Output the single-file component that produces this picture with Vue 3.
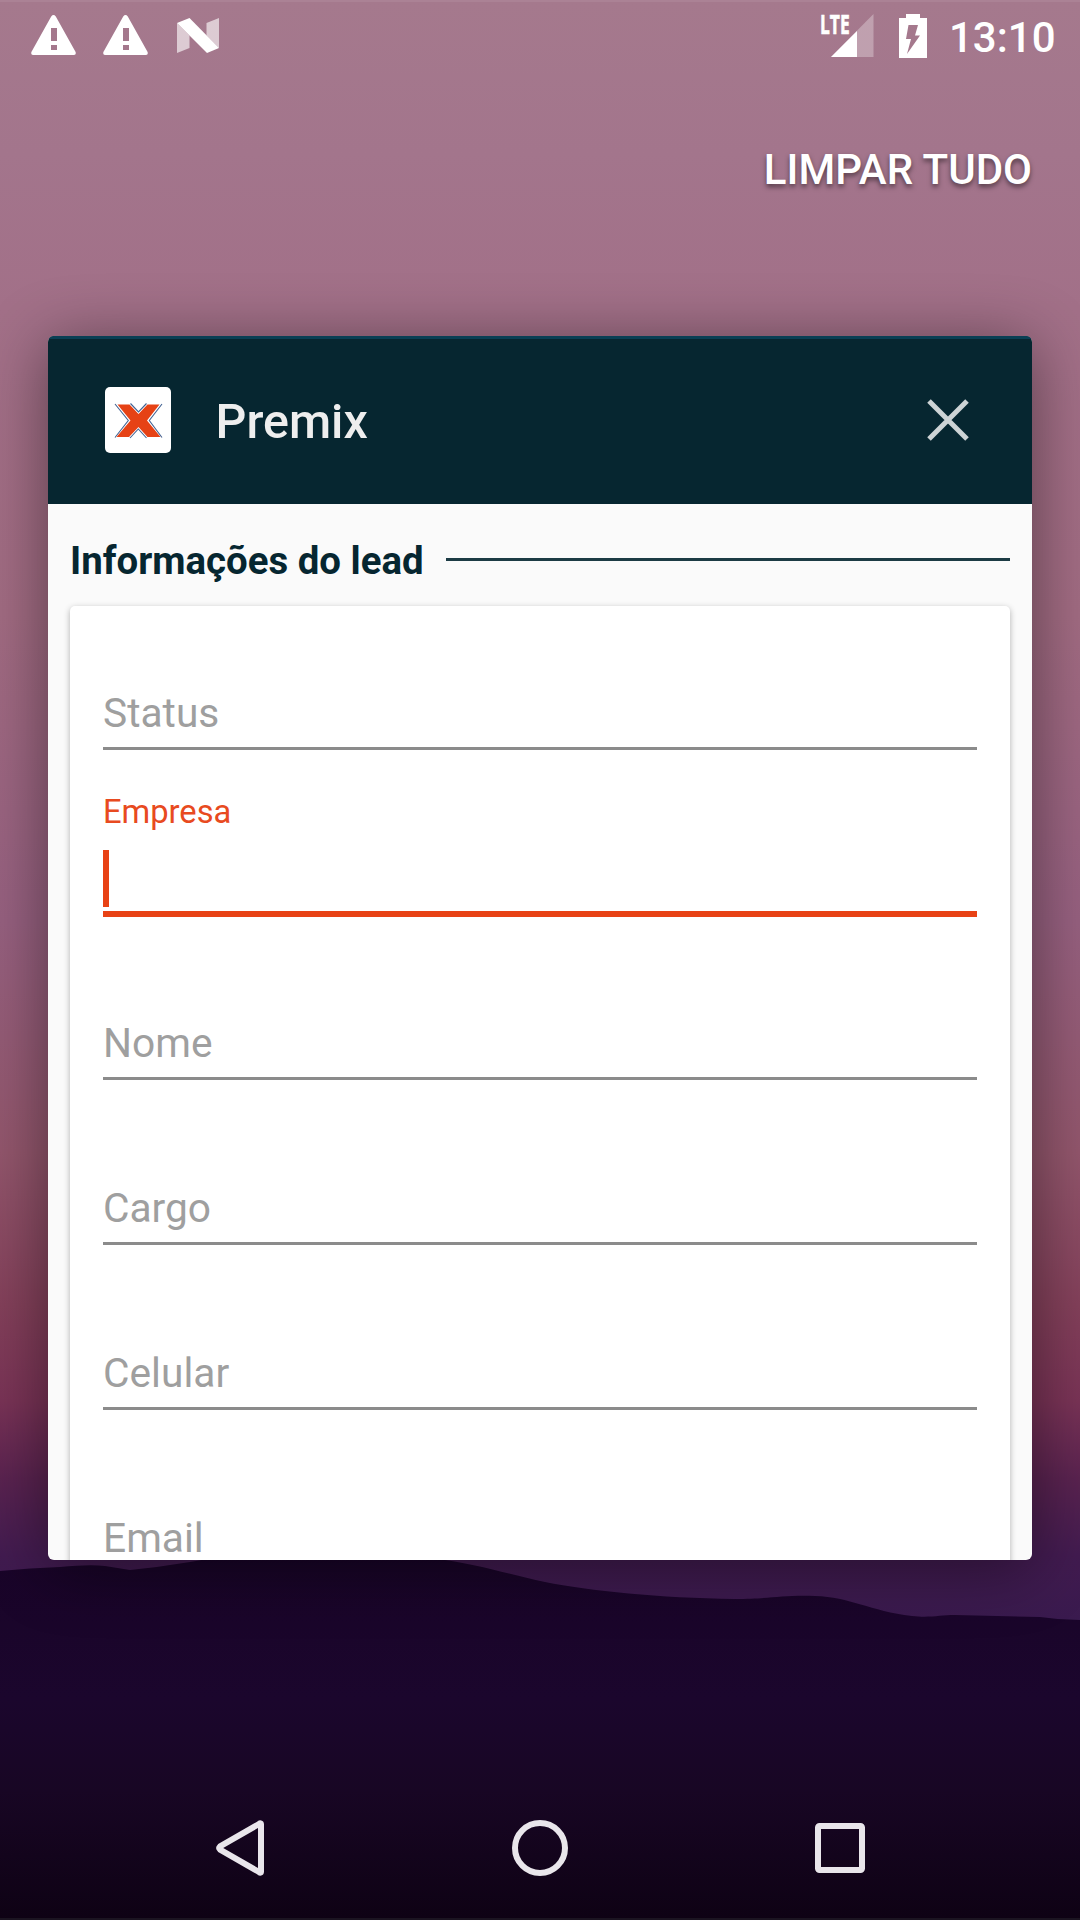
<script setup>
const fields = [
  { label: 'Status' },
  { label: 'Empresa', active: true },
  { label: 'Nome' },
  { label: 'Cargo' },
  { label: 'Celular' },
  { label: 'Email' },
]
</script>

<template>
  <div class="screen">
    <svg class="wallpaper" viewBox="0 0 1080 1920" aria-hidden="true">
      <defs>
        <linearGradient id="sky" x1="0" y1="0" x2="0" y2="1">
          <stop offset="0" stop-color="#a5798d" />
          <stop offset="0.08" stop-color="#a3758c" />
          <stop offset="0.16" stop-color="#a27088" />
          <stop offset="0.32" stop-color="#a16b82" />
          <stop offset="0.48" stop-color="#96607f" />
          <stop offset="0.6" stop-color="#92566c" />
          <stop offset="0.68" stop-color="#83405a" />
          <stop offset="0.73" stop-color="#793356" />
          <stop offset="0.77" stop-color="#5a2350" />
          <stop offset="0.81" stop-color="#421b50" />
          <stop offset="0.85" stop-color="#381a4e" />
        </linearGradient>
        <linearGradient id="hill" x1="0" y1="0" x2="0" y2="1">
          <stop offset="0" stop-color="#190428" />
          <stop offset="0.4" stop-color="#1b062d" />
          <stop offset="0.65" stop-color="#180624" />
          <stop offset="1" stop-color="#0e0214" />
        </linearGradient>
      </defs>
      <rect width="1080" height="1920" fill="url(#sky)" />
    </svg>

    <header class="status">
      <svg class="warn" viewBox="0 0 45 40"><path fill-rule="evenodd" d="M20.2 1.4Q22.5-1.2 24.8 1.4L44.6 37Q45.4 39.8 43 40H2Q-.4 39.8.4 37ZM20 13V26H26V13ZM20 30V35H26V30Z" /></svg>
      <svg class="warn second" viewBox="0 0 45 40"><path fill-rule="evenodd" d="M20.2 1.4Q22.5-1.2 24.8 1.4L44.6 37Q45.4 39.8 43 40H2Q-.4 39.8.4 37ZM20 13V26H26V13ZM20 30V35H26V30Z" /></svg>
      <svg class="nougat" viewBox="0 0 42 35"><path opacity=".62" d="M0 5L12.5 17.5V30L0 35ZM29.5 5L42 0V30L29.5 17.5Z" /><path d="M0 5L12.5 0L42 30L30 35Z" /></svg>
      <span class="space"></span>
      <div class="signal">
        <svg viewBox="0 0 54 44"><path opacity=".3" d="M53.500 0V43H11Z" /><path d="M37 17V43H11Z" /></svg>
        <span class="lte">LTE</span>
      </div>
      <svg class="battery" viewBox="0 0 28 44"><path fill-rule="evenodd" d="M7 0H21V4H28V44H0V4H7ZM9.500 11L7 25H12L8 40L21 21.500H16L19 11Z" /></svg>
      <span class="clock">13:10</span>
    </header>

    <div class="actions"><span class="clear">LIMPAR TUDO</span></div>

    <main class="task">
      <div class="task-head">
        <svg class="logo" viewBox="0 0 66 66">
          <rect width="66" height="66" rx="5" fill="#fff" />
          <path d="M10 17L23.300 33.500L10 50.500M57 17L44.300 33.500L57 50.500M25.500 16.500L33.500 25L41.500 16.500M25 51L33.300 42L41.500 51" fill="none" stroke="#426293" stroke-width="1.100" />
          <path d="M12.500 17.500H24.500L33.500 27L42.500 17.500H54.500L42 33.500L55.500 50H42.500L33.500 40L24 50H11.500L25.500 33.500Z" fill="#e64215" />
        </svg>
        <span class="app-name">Premix</span>
        <svg class="close" viewBox="0 0 42 42"><path d="M2 2L40 40M40 2L2 40" fill="none" stroke="#cdd3d5" stroke-width="5" /></svg>
      </div>
      <section class="content">
        <div class="heading"><h2>Informações do lead</h2><i></i></div>
        <div class="form">
          <div v-for="field in fields" :key="field.label" class="field" :class="{ active: field.active }">
            <label>{{ field.label }}</label>
            <b v-if="field.active" class="caret"></b>
          </div>
        </div>
      </section>
    </main>

    <svg class="hills" viewBox="0 0 1080 370" aria-hidden="true">
      <path fill="url(#hill)" d="M0 21Q30 18 60 17Q90 14 105 16L130 20Q160 17 190 12C270-3 370 1 430 8C480 14 510 25 545 32C590 41 660 48 735 49C770 49 780 45 815 46C850 47 870 61 912 66C930 68 940 65 955 65L1040 67Q1060 70 1080 70V370H0Z" />
    </svg>

    <nav class="nav">
      <svg class="back" viewBox="0 0 48 56"><path d="M45 4.500V51.500Q45 53.500 43 52L4 29.500Q2.500 28 4 26.500L43 4Q45 2.500 45 4.500Z" /></svg>
      <svg class="home" viewBox="0 0 56 56"><circle cx="28" cy="28" r="25" /></svg>
      <svg class="recent" viewBox="0 0 50 50"><rect x="3" y="3" width="44" height="44" rx="1.500" /></svg>
    </nav>
  </div>
</template>

<style>
body { margin: 0; }
</style>

<style scoped>
.screen {
  position: relative;
  display: flex;
  flex-direction: column;
  width: 1080px;
  height: 1920px;
  overflow: hidden;
  font-family: Roboto, "Liberation Sans", sans-serif;
  color: #fff;
}
.screen svg { display: block; flex: none; }
.screen .wallpaper { position: absolute; inset: 0; width: 1080px; height: 1920px; }
.screen .hills { position: absolute; left: 0; top: 1550px; width: 1080px; height: 370px; }

.status {
  position: relative;
  display: flex;
  flex: none;
  box-sizing: border-box;
  height: 72px;
  padding: 14px 24px 0 31px;
  fill: #fff;
  box-shadow: inset 0 2px rgba(255, 255, 255, .07);
}
.warn { width: 45px; height: 40px; margin-top: 1px; }
.second { margin-left: 27px; }
.nougat { width: 42px; height: 35px; margin: 4px 0 0 29px; }
.space { flex: 1; }
.signal { position: relative; width: 54px; height: 44px; margin-right: 25px; }
.signal svg { width: 54px; height: 44px; }
.lte {
  position: absolute;
  left: 0;
  top: 0;
  font: 700 26px/21px "Open Sans", Roboto, sans-serif;
  -webkit-text-stroke: .6px #fff;
  transform: scaleX(.67);
  transform-origin: left;
}
.battery { width: 28px; height: 44px; }
.clock { width: 107px; margin-left: 22px; font-size: 42px; font-weight: 500; line-height: 48px; white-space: nowrap; }

.actions {
  position: relative;
  display: flex;
  flex: none;
  justify-content: flex-end;
  align-items: center;
  height: 194px;
  margin: 0 48px 70px 0;
}
.clear { font-size: 42px; font-weight: 500; text-shadow: 0 3px 5px rgba(0, 0, 0, .5); }

.task {
  position: relative;
  z-index: 1;
  display: flex;
  flex: none;
  flex-direction: column;
  height: 1224px;
  margin: 0 48px;
  border-radius: 6px;
  overflow: hidden;
  background: #fafafa;
  box-shadow: 0 8px 64px rgba(0, 0, 0, .45);
}
.task-head {
  display: flex;
  flex: none;
  align-items: center;
  box-sizing: border-box;
  height: 168px;
  padding: 0 63px 0 57px;
  background: #062630;
  border-top: 3px solid #093f54;
}
.logo { width: 66px; height: 66px; margin-bottom: 3px; }
.app-name { flex: 1; margin-left: 44.5px; font-size: 48.4px; font-weight: 500; color: #eee; }
.close { width: 42px; height: 42px; margin-bottom: 3px; overflow: visible; }

.content { flex: none; padding: 0 22px; }
.heading { display: flex; align-items: center; height: 102px; }
h2 { margin: 12px 0 0; font-size: 38.4px; font-weight: 700; line-height: 50px; color: #062630; white-space: nowrap; }
.heading i { flex: 1; height: 3px; margin: 8px 0 0 22px; background: #1c3b44; }
.form {
  box-sizing: border-box;
  height: 1000px;
  padding: 0 33px;
  background: #fff;
  border-radius: 5px;
  box-shadow: 0 2px 6px rgba(0, 0, 0, .3);
}
.field {
  position: relative;
  display: flex;
  align-items: flex-end;
  box-sizing: border-box;
  height: 165px;
  border-bottom: 3px solid #8b8b8b;
}
.field:first-child { height: 144px; }
label { margin-bottom: 13px; font-size: 40.7px; line-height: 42px; color: #9f9f9f; }
.active { height: 167px; margin-bottom: -2px; border-bottom: 6px solid #e84215; }
.active label { margin-bottom: 79px; font-size: 32.7px; line-height: 40px; color: #e84a20; }
.caret { position: absolute; left: 0; bottom: 4px; width: 6px; height: 57px; background: #e84215; }

.nav {
  position: relative;
  display: flex;
  flex: none;
  align-items: center;
  box-sizing: border-box;
  height: 144px;
  margin-top: auto;
  padding-left: 216px;
  fill: none;
  stroke: #e9e6eb;
  stroke-width: 6;
  box-shadow: inset 0 -2px #1b1421;
}
.back { width: 48px; height: 56px; }
.home { width: 56px; height: 56px; margin-left: 248px; }
.recent { width: 50px; height: 50px; margin-left: 247px; }
</style>
